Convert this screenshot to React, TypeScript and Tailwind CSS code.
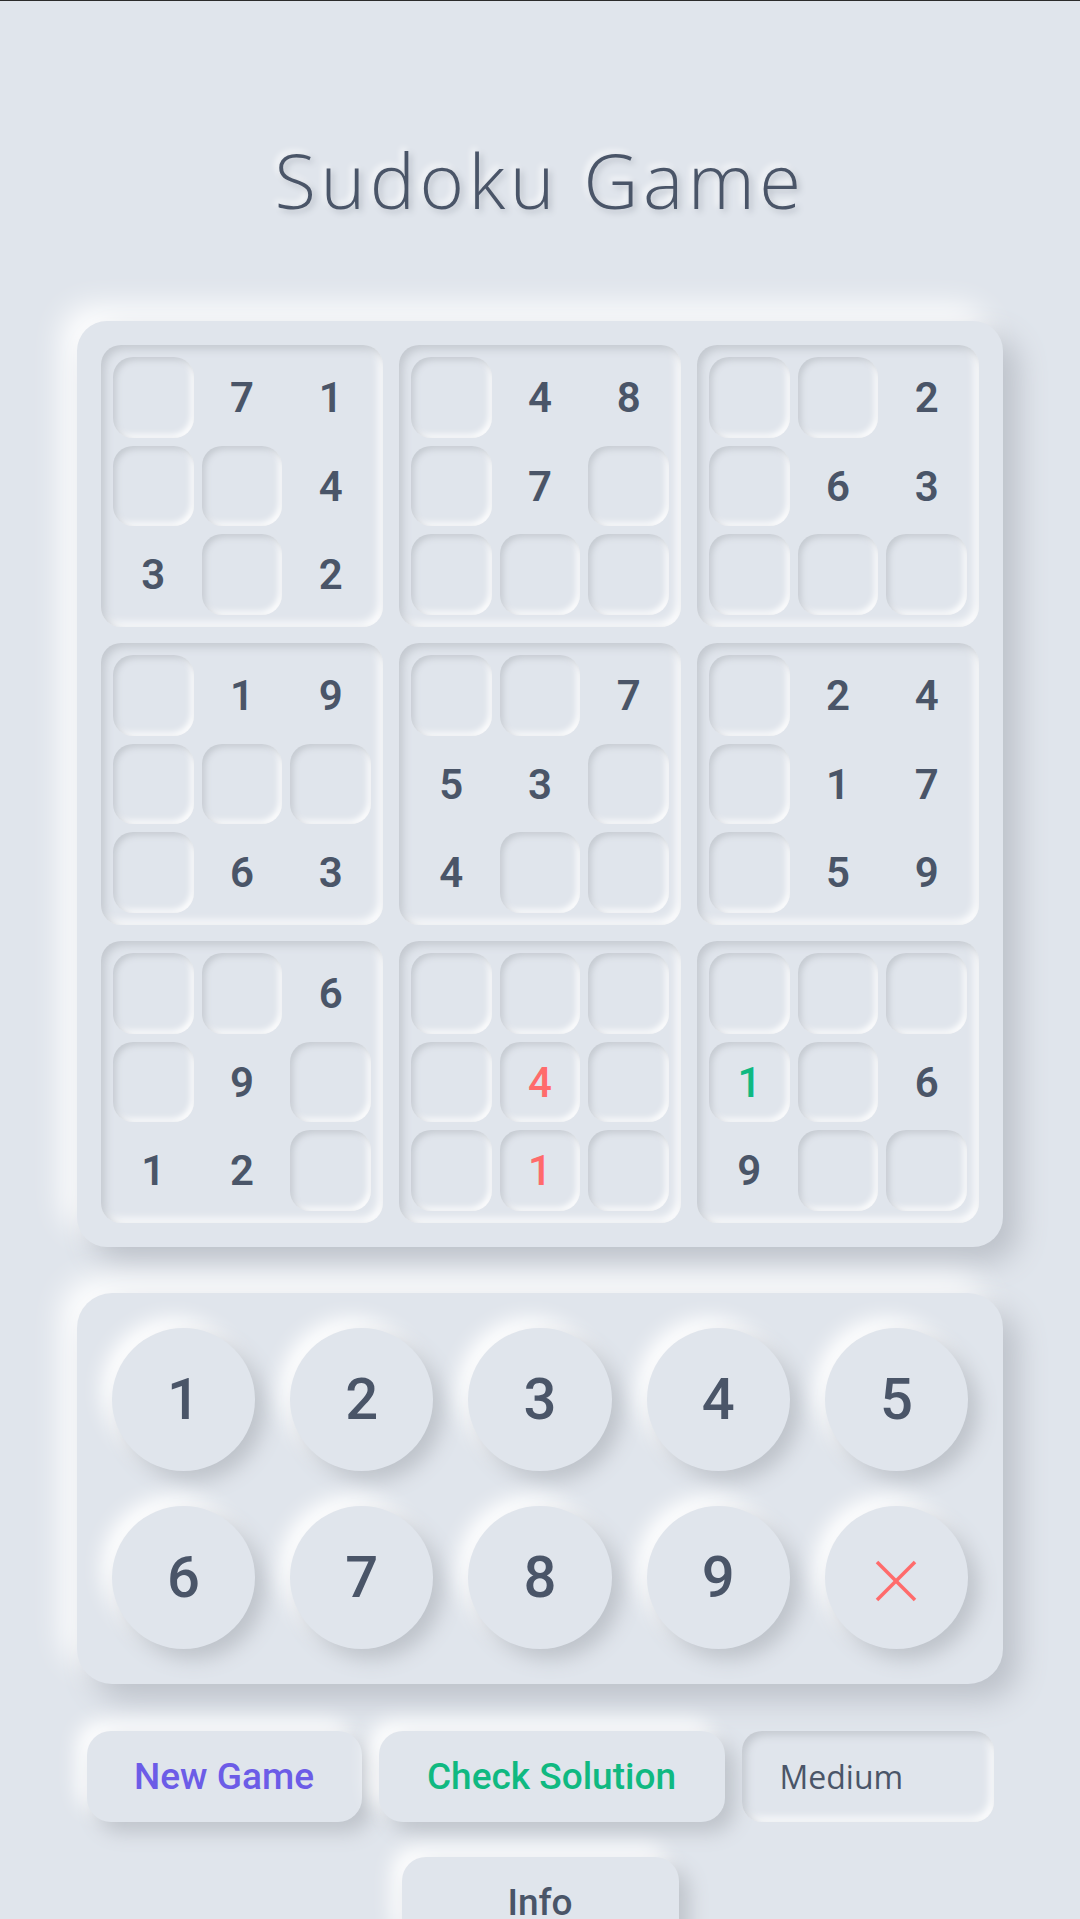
import { useState } from "react";

type Cell = { v: number | null; given: boolean; tone?: "red" | "green" };

const boxes: (number | string | null)[][] = [
  [null, 7, 1, null, null, 4, 3, null, 2],
  [null, 4, 8, null, 7, null, null, null, null],
  [null, null, 2, null, 6, 3, null, null, null],
  [null, 1, 9, null, null, null, null, 6, 3],
  [null, null, 7, 5, 3, null, 4, null, null],
  [null, 2, 4, null, 1, 7, null, 5, 9],
  [null, null, 6, null, 9, null, 1, 2, null],
  [null, null, null, null, "r4", null, null, "r1", null],
  [null, null, null, "g1", null, 6, 9, null, null],
];

function toCell(x: number | string | null): Cell {
  if (x === null) return { v: null, given: false };
  if (typeof x === "number") return { v: x, given: true };
  return { v: Number(x.slice(1)), given: false, tone: x[0] === "r" ? "red" : "green" };
}

const raised = "shadow-[10px_10px_20px_#bec3ca,-10px_-10px_20px_#ffffff]";

export default function App() {
  const [level, setLevel] = useState("medium");

  return (
    <div className="min-h-screen bg-[#e0e5ec] border-t border-[#2b2b2b] text-[#4a5568] font-['Roboto',sans-serif]">
      <div className="w-[926px] mx-auto pt-[141px] pb-10 flex flex-col">
        <h1 className="text-center text-[76px] leading-none font-light tracking-[4.5px] font-['Open_Sans',sans-serif] [text-shadow:3px_3px_6px_#b8bec7,-3px_-3px_6px_#ffffff]">
          Sudoku Game
        </h1>

        {/* board */}
        <div className="mt-[103px] p-6 rounded-[30px] bg-[#e0e5ec] grid grid-cols-3 gap-4 shadow-[15px_15px_30px_#bcc1c9,-15px_-15px_30px_#ffffff]">
          {boxes.map((box, bi) => (
            <div
              key={bi}
              className="p-3 rounded-[20px] grid grid-cols-3 gap-2 shadow-[inset_4px_4px_8px_#c3c8cf,inset_-4px_-4px_8px_#ffffff]"
            >
              {box.map(toCell).map((c, ci) => (
                <div
                  key={ci}
                  className={`aspect-square rounded-[20px] flex items-center justify-center text-[42px] ${
                    c.given
                      ? "font-semibold text-[#4a5568]"
                      : "shadow-[inset_3px_3px_6px_#c5cad1,inset_-3px_-3px_6px_#ffffff] font-medium"
                  } ${c.tone === "red" ? "text-[#ff6b6b]" : ""} ${c.tone === "green" ? "text-[#10b981]" : ""}`}
                >
                  {c.v ?? ""}
                </div>
              ))}
            </div>
          ))}
        </div>

        {/* keypad */}
        <div className="mt-[46px] p-[35px] rounded-[35px] bg-[#e0e5ec] grid grid-cols-5 gap-[35px] shadow-[15px_15px_30px_#bcc1c9,-15px_-15px_30px_#ffffff]">
          {[1, 2, 3, 4, 5, 6, 7, 8, 9].map((n) => (
            <button
              key={n}
              type="button"
              className={`aspect-square rounded-full bg-[#e0e5ec] flex items-center justify-center text-[58px] font-medium ${raised}`}
            >
              {n}
            </button>
          ))}
          <button
            type="button"
            aria-label="Clear"
            className={`aspect-square rounded-full bg-[#e0e5ec] flex items-center justify-center pt-[6px] ${raised}`}
          >
            <svg width="42" height="42" viewBox="0 0 42 42" fill="none" stroke="#ff6b6b" strokeWidth="3.5">
              <line x1="2" y1="2" x2="40" y2="40" />
              <line x1="40" y1="2" x2="2" y2="40" />
            </svg>
          </button>
        </div>

        {/* controls */}
        <div className="mt-[47px] flex flex-wrap justify-center gap-x-[17px] gap-y-[35px]">
          <button
            type="button"
            className={`w-[275px] h-[91px] rounded-[24px] bg-[#e0e5ec] text-[37px] font-medium text-[#6c5ce7] ${raised}`}
          >
            New Game
          </button>
          <button
            type="button"
            className={`w-[346px] h-[91px] rounded-[24px] bg-[#e0e5ec] text-[37px] font-medium text-[#10b981] ${raised}`}
          >
            Check Solution
          </button>
          <select
            value={level}
            onChange={(e) => setLevel(e.target.value)}
            className="appearance-none w-[252px] h-[91px] rounded-[20px] bg-[#e0e5ec] pl-[38px] text-[32px] font-['Open_Sans',sans-serif] text-[#4a5568] outline-none shadow-[inset_4px_4px_8px_#c3c8cf,inset_-4px_-4px_8px_#ffffff]"
          >
            <option value="easy">Easy</option>
            <option value="medium">Medium</option>
            <option value="hard">Hard</option>
          </select>
          <button
            type="button"
            className={`w-[277px] h-[91px] rounded-[24px] bg-[#e0e5ec] text-[37px] font-medium text-[#4a5568] ${raised}`}
          >
            Info
          </button>
        </div>
      </div>
    </div>
  );
}
